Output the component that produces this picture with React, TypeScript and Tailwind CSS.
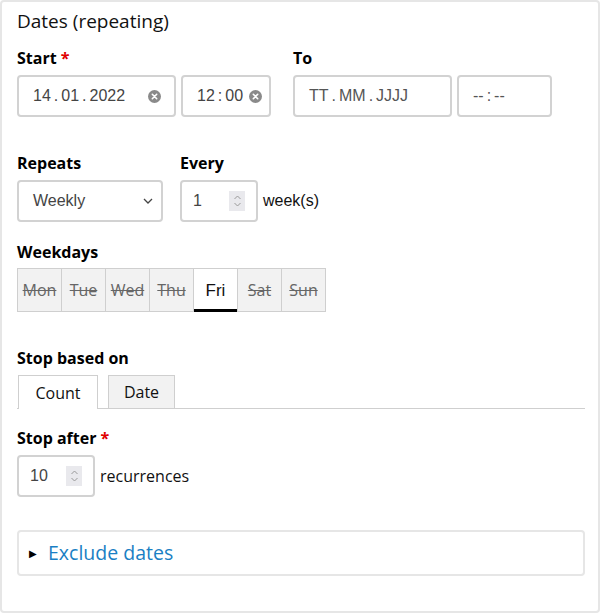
// Repeating dates form panel

const SANS = "font-['Open_Sans',sans-serif]";
const ARIAL = "font-['Liberation_Sans',Arial,sans-serif]";

function Req() {
  return <span className="text-[#e00000] ml-1">*</span>;
}

function Label({ children, className = "" }: { children: React.ReactNode; className?: string }) {
  return <div className={`text-[16px] leading-[20px] font-bold text-black ${className}`}>{children}</div>;
}

function ClearIcon() {
  return (
    <svg width="13" height="13" viewBox="0 0 13 13" className="shrink-0">
      <circle cx="6.5" cy="6.5" r="6.5" fill="#8a8a8a" />
      <path d="M4.3 4.3 L8.7 8.7 M8.7 4.3 L4.3 8.7" stroke="#fff" strokeWidth="1.6" strokeLinecap="round" />
    </svg>
  );
}

function Spinner() {
  return (
    <div className="w-[16px] h-[20px] bg-[#e9e9ed] flex items-center justify-center">
      <svg width="9" height="14" viewBox="0 0 9 14">
        <path d="M1.5 5 L4.5 2 L7.5 5 M1.5 9 L4.5 12 L7.5 9" stroke="#9a9a9a" strokeWidth="1" fill="none" />
      </svg>
    </div>
  );
}

// segmented value like the browser's date/time fields
function Segs({ parts, sep }: { parts: string[]; sep: string }) {
  return (
    <span className="flex">
      {parts.map((p, i) => (
        <span key={i} className="flex">
          {i > 0 && <span className="px-[3px]">{sep}</span>}
          <span>{p}</span>
        </span>
      ))}
    </span>
  );
}

const box = "h-[42px] border-2 border-[#d2d2d2] rounded-[4px] bg-white flex items-center";

const days = ["Mon", "Tue", "Wed", "Thu", "Fri", "Sat", "Sun"];

export default function App() {
  return (
    <div className={`w-[600px] h-[613px] bg-white border-2 border-[#e6e6e6] rounded-[4px] pl-[15px] pr-[13px] ${SANS}`}>
      <div className="mt-[7px] text-[19px] leading-[24px] text-[#111]">Dates (repeating)</div>

      <div className="flex mt-[15px]">
        <div className="w-[276px]">
          <Label>Start<Req /></Label>
          <div className="flex gap-[5px] mt-[7px]">
            <div className={`${box} w-[159px] pl-[14px] pr-[13px] justify-between ${ARIAL} text-[16px] text-[#444]`}>
              <Segs parts={["14", "01", "2022"]} sep="." />
              <ClearIcon />
            </div>
            <div className={`${box} w-[90px] pl-[14px] pr-[7px] justify-between ${ARIAL} text-[16px] text-[#444]`}>
              <Segs parts={["12", "00"]} sep=":" />
              <ClearIcon />
            </div>
          </div>
        </div>
        <div>
          <Label>To</Label>
          <div className="flex gap-[5px] mt-[7px]">
            <div className={`${box} w-[159px] pl-[14px] ${ARIAL} text-[16px] text-[#555]`}>
              <Segs parts={["TT", "MM", "JJJJ"]} sep="." />
            </div>
            <div className={`${box} w-[95px] pl-[14px] ${ARIAL} text-[16px] text-[#555]`}>
              <Segs parts={["--", "--"]} sep=":" />
            </div>
          </div>
        </div>
      </div>

      <div className="flex mt-[36px]">
        <div className="w-[163px]">
          <Label>Repeats</Label>
          <div className={`${box} w-[146px] mt-[7px] pl-[14px] pr-[8px] justify-between ${ARIAL} text-[16px] text-[#444]`}>
            <span>Weekly</span>
            <svg width="10" height="6" viewBox="0 0 10 6">
              <path d="M1 1 L5 5 L9 1" stroke="#444" strokeWidth="1.3" fill="none" />
            </svg>
          </div>
        </div>
        <div>
          <Label>Every</Label>
          <div className="flex items-center mt-[7px] gap-[5px]">
            <div className={`${box} w-[78px] pl-[11px] pr-[11px] justify-between ${ARIAL} text-[16px] text-[#444]`}>
              <span>1</span>
              <Spinner />
            </div>
            <span className={`${ARIAL} text-[16px] text-[#111]`}>week(s)</span>
          </div>
        </div>
      </div>

      <Label className="mt-[20px]">Weekdays</Label>
      <div className="flex mt-[6px]">
        {days.map((d, i) => {
          const on = d === "Fri";
          return (
            <div
              key={d}
              className={`w-[45px] h-[44px] flex items-center justify-center border border-[#cfcfcf] ${i > 0 ? "-ml-px" : ""} ${
                on
                  ? `bg-white text-[#111] shadow-[inset_0_-3px_0_#000] border-b-0 ${ARIAL} text-[17px]`
                  : "bg-[#f2f2f2] text-[#666] line-through text-[16px]"
              }`}
            >
              {d}
            </div>
          );
        })}
      </div>

      <Label className="mt-[36px]">Stop based on</Label>
      <div className="flex items-end mt-[7px] border-b border-[#cfcfcf] h-[34px]">
        <div className="w-[80px] h-[34px] border border-b-0 border-[#cfcfcf] bg-white -mb-px flex items-center justify-center text-[16px] text-[#111] ml-px">
          Count
        </div>
        <div className="w-[67px] h-[33px] ml-[10px] border border-b-0 border-[#cfcfcf] bg-[#f2f2f2] flex items-center justify-center text-[16px] text-[#111]">
          Date
        </div>
      </div>

      <Label className="mt-[19px]">Stop after<Req /></Label>
      <div className="flex items-center mt-[7px] gap-[5px]">
        <div className={`${box} w-[78px] pl-[11px] pr-[11px] justify-between ${ARIAL} text-[16px] text-[#444]`}>
          <span>10</span>
          <Spinner />
        </div>
        <span className="text-[16px] text-[#111]">recurrences</span>
      </div>

      <div className="mt-[33px] h-[46px] border-2 border-[#e6e6e6] rounded-[4px] flex items-center pl-[10px]">
        <span className="text-[10px] text-black mr-[11px]">▶</span>
        <span className="text-[19.5px] text-[#1a7fc4]">Exclude dates</span>
      </div>
    </div>
  );
}
